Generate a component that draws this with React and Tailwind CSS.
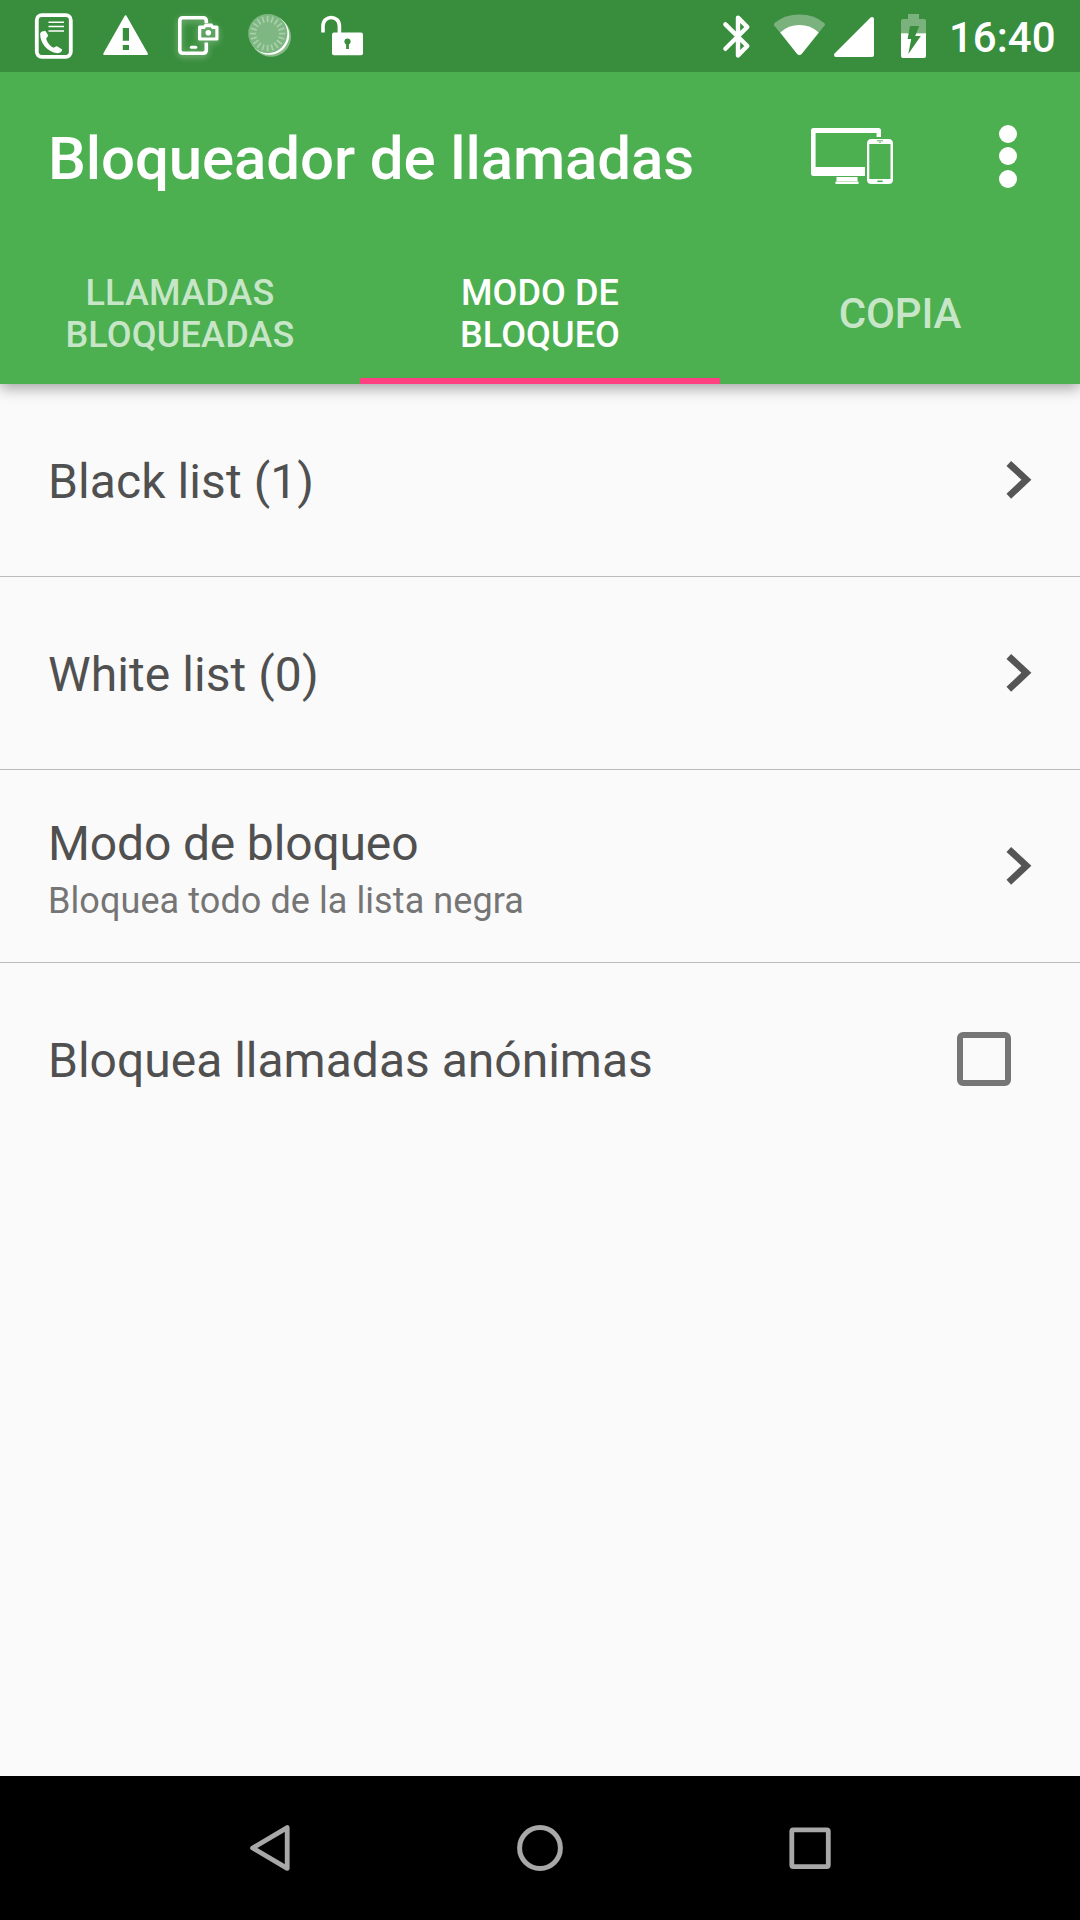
import React from "react";

const ticks = Array.from({ length: 20 }, (_, i) => i * 18);

function CallListIcon() {
  return (
    <svg className="h-[72px] w-[72px]" viewBox="18 0 72 72" fill="none">
      <rect x="36.8" y="15.2" width="34" height="41.6" rx="5" stroke="#fff" strokeWidth="3.8" />
      <path d="M48.5 22.2H64M48.5 26.5H64M48.5 31H64" stroke="#fff" strokeWidth="1.6" />
      <path
        d="M40.2 33.3C41.4 31.2 43.6 30.6 45.4 31.1L48.2 35.2C48 36.8 46.8 37.5 46.2 38.5C46.8 42 50 46.2 53.6 47.8C55 47.4 56 46 57.4 46.4L62.2 49.6C62.2 51.8 60 53.2 57.5 53.2C47.5 52.2 39.6 43 40.2 33.3Z"
        fill="#fff"
      />
    </svg>
  );
}

function WarningIcon() {
  return (
    <svg className="h-[72px] w-[72px]" viewBox="90 0 72 72">
      <path d="M125.6 16.2L147 54H104.2Z" fill="#fff" stroke="#fff" strokeWidth="2" strokeLinejoin="round" />
      <path d="M122.8 28h6.2v12.8h-6.2zM122.8 45h6.2v5h-6.2z" fill="#388e3c" />
    </svg>
  );
}

function ScreenshotIcon() {
  return (
    <svg className="h-[72px] w-[72px] drop-shadow-[0_2px_3px_rgba(255,255,255,0.4)]" viewBox="162 0 72 72" fill="none">
      <path d="M206.3 23V21Q206.3 17.8 203 17.8H183Q179.8 17.8 179.8 21V50Q179.8 53.2 183 53.2H203Q206.3 53.2 206.3 50V42.5" stroke="#fff" strokeWidth="3.6" />
      <path d="M191.4 47.2h4.4" stroke="#fff" strokeWidth="3" strokeLinecap="round" />
      <path
        fillRule="evenodd"
        d="M199.4 25.6H203.5L205 23.6H212L213.5 25.6H217Q218.5 25.6 218.5 27.1V39Q218.5 40.5 217 40.5H199.5Q198 40.5 198 39V27.1Q198 25.6 199.4 25.6ZM201.3 29V37.4H215.3V29H212L210.8 27.2H206L204.8 29Z"
        fill="#fff"
      />
      <circle cx="208.3" cy="32.8" r="2.8" fill="#fff" />
    </svg>
  );
}

function SpinnerIcon() {
  return (
    <svg className="h-[72px] w-[72px]" viewBox="234 0 72 72">
      <circle cx="271" cy="36.8" r="20" fill="#fff" fillOpacity=".4" />
      <circle cx="269.4" cy="35" r="19.8" fill="#fff" />
      <circle cx="267.8" cy="33.6" r="19.6" fill="#7fb782" />
      <g stroke="#a9d0ab" strokeWidth="1.7">
        {ticks.map((a) => (
          <path key={a} d="M267.6 16V22.2" transform={`rotate(${a} 267.6 33.6)`} />
        ))}
      </g>
    </svg>
  );
}

function UnlockIcon() {
  return (
    <svg className="h-[72px] w-[72px]" viewBox="306 0 72 72" fill="none">
      <path d="M323 32.6V26C323 14.6 339.4 14.6 339.4 26V33" stroke="#fff" strokeWidth="3.6" />
      <rect x="332" y="32.5" width="31" height="22.7" rx="2" fill="#fff" />
      <circle cx="347.5" cy="41.5" r="3.1" fill="#388e3c" />
      <path d="M347.5 42v7" stroke="#388e3c" strokeWidth="2.8" />
    </svg>
  );
}

function BluetoothIcon() {
  return (
    <svg className="h-[72px] w-[60px]" viewBox="700 0 60 72" fill="none">
      <path
        d="M725.4 24.4L747.3 46L738 55.4V17.6L747.3 27L725.4 48.8"
        stroke="#fff"
        strokeWidth="4.4"
        strokeLinecap="round"
        strokeLinejoin="round"
      />
    </svg>
  );
}

function WifiIcon() {
  return (
    <svg className="h-[72px] w-[70px]" viewBox="760 0 70 72">
      <path d="M799.3 55.3Q798 55 797 53.8L774 25.2Q773.6 24 774.6 23Q785 14.6 799.4 14.6Q814 14.6 824.2 23Q825.4 24 824.8 25.2L801.8 53.8Q800.8 55 799.3 55.3Z" fill="#7ab17d" />
      <path d="M780.2 32.4Q788.6 25 799.4 25Q810.4 25 818.8 32.4L801.8 53.8Q799.4 56.2 797 53.8Z" fill="#fff" />
    </svg>
  );
}

function SignalIcon() {
  return (
    <svg className="h-[72px] w-[50px]" viewBox="830 0 50 72">
      <path d="M872 19V55H836Z" fill="#fff" stroke="#fff" strokeWidth="4" strokeLinejoin="round" />
    </svg>
  );
}

function BatteryIcon() {
  return (
    <svg className="h-[72px] w-[60px]" viewBox="880 0 60 72">
      <path d="M908 14H919V19H924Q926 19 926 21V33.3H901V21Q901 19 903 19H908Z" fill="#7ab17d" />
      <path d="M901 33.3H926V56Q926 58 924 58H903Q901 58 901 56Z" fill="#fff" />
      <path d="M910 26H919.2L915.2 36H920.8L908.3 54L911.2 39H907.6Z" fill="#388e3c" />
    </svg>
  );
}

function DevicesIcon() {
  return (
    <svg className="h-[60px] w-[84px]" viewBox="810 126 84 60">
      <path fillRule="evenodd" d="M813.5 128H878.5Q881 128 881 130.5V137H876.6V133H815.6V167H865V176H813.5Q811 176 811 173.5V130.5Q811 128 813.5 128Z" fill="#fff" />
      <path d="M836.5 177H857.5V181H836.5ZM835.4 181.8H858.6V184H835.4Z" fill="#fff" />
      <path d="M836 181.4H858" stroke="#fff" strokeOpacity=".6" strokeWidth="1" />
      <path fillRule="evenodd" d="M871.5 139H888.5Q893 139 893 143.5V179.5Q893 184 888.5 184H871.5Q867 184 867 179.5V143.5Q867 139 871.5 139ZM869.3 144V179H890.5V144Z" fill="#fff" />
      <path d="M877 140.8H883M879 142.2H881" stroke="#4caf50" strokeWidth=".9" />
      <rect x="877" y="180.4" width="6" height="1.7" rx=".8" fill="#4caf50" />
    </svg>
  );
}

function Chevron() {
  return (
    <svg className="mr-[48px] h-10 w-[28px]" viewBox="0 0 28 40" fill="none">
      <path d="M4.8 3.4L22.4 19.8L4.8 36.2" stroke="#555" strokeWidth="6.8" />
    </svg>
  );
}

function Row({ title, subtitle, last, children }) {
  return (
    <div className={last ? "flex h-[192px] items-center justify-between pl-12" : "flex h-[193px] items-center justify-between border-b border-[#bcbcbc] pl-12"}>
      {subtitle ? (
        <div className="pt-[11px]">
          <div className="text-[48px] leading-[57px] tracking-[-0.15px] text-[#505050]">{title}</div>
          <div className="pt-px text-[36px] leading-[56px] tracking-[0.08px] text-[#757575]">{subtitle}</div>
        </div>
      ) : (
        <div className={last ? "pt-[2px] text-[48px] leading-[57px] text-[#505050]" : "pt-[2px] text-[48px] leading-[57px] tracking-[0.08px] text-[#505050]"}>{title}</div>
      )}
      {children}
    </div>
  );
}

export default function App() {
  return (
    <div className="flex h-[1920px] w-[1080px] flex-col overflow-hidden bg-[#fafafa] font-[Roboto,sans-serif]">
      <div className="z-20 flex h-[72px] shrink-0 items-center bg-[#388e3c] pl-[18px] text-white">
        <CallListIcon />
        <WarningIcon />
        <ScreenshotIcon />
        <SpinnerIcon />
        <UnlockIcon />
        <div className="ml-auto flex w-[380px] items-center">
          <BluetoothIcon />
          <WifiIcon />
          <SignalIcon />
          <BatteryIcon />
          <span className="ml-[9px] pt-[4px] text-[42px] leading-[50px] font-medium">16:40</span>
        </div>
      </div>

      <header className="z-10 h-[312px] shrink-0 bg-[#4caf50] text-white shadow-[0_4px_14px_rgba(0,0,0,0.36)]">
        <div className="flex h-[168px] items-center pl-12">
          <h1 className="w-[762px] pt-[5px] text-[60px] leading-[70px] font-medium tracking-[-0.11px] whitespace-nowrap">Bloqueador de llamadas</h1>
          <DevicesIcon />
          <div className="ml-[105px] flex flex-col gap-[4.5px]">
            <i className="size-[18px] rounded-full bg-white" />
            <i className="size-[18px] rounded-full bg-white" />
            <i className="size-[18px] rounded-full bg-white" />
          </div>
        </div>
        <nav className="grid h-[144px] grid-cols-3 text-center text-[36px] leading-[42px] font-medium">
          <div className="flex items-center justify-center pt-[3px] tracking-[0.2px] text-white/70">LLAMADAS<br />BLOQUEADAS</div>
          <div className="flex items-center justify-center border-b-[6px] border-[#ff4081] pt-[9px] tracking-[0.1px]">MODO DE<br />BLOQUEO</div>
          <div className="flex items-center justify-center pt-[3px] text-[42px] tracking-[-0.2px] text-white/70">COPIA</div>
        </nav>
      </header>

      <main className="flex-1">
        <Row title="Black list (1)"><Chevron /></Row>
        <Row title="White list (0)"><Chevron /></Row>
        <Row title="Modo de bloqueo" subtitle="Bloquea todo de la lista negra"><Chevron /></Row>
        <Row title="Bloquea llamadas anónimas" last>
          <div className="mr-[69px] size-[54px] rounded-[6px] border-[6px] border-[#757575]" />
        </Row>
      </main>

      <footer className="flex h-[144px] shrink-0 items-center justify-center gap-[210px] bg-black">
        <svg className="size-[60px]" viewBox="240 1818 60 60" fill="none">
          <path d="M287.2 1827.6V1868.4L252.6 1848Z" stroke="#a8a8a8" strokeWidth="4.8" strokeLinejoin="round" />
        </svg>
        <svg className="size-[60px]" viewBox="510 1818 60 60" fill="none">
          <circle cx="540" cy="1848" r="20.4" stroke="#a8a8a8" strokeWidth="5" />
        </svg>
        <svg className="size-[60px]" viewBox="780 1818 60 60" fill="none">
          <rect x="791.8" y="1829.8" width="36.5" height="36.8" rx="1.5" stroke="#a8a8a8" strokeWidth="4.8" />
        </svg>
      </footer>
    </div>
  );
}
